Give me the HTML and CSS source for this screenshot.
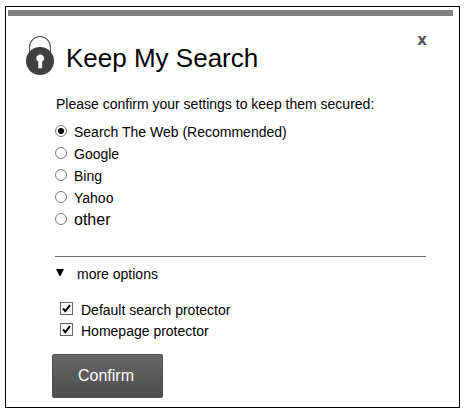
FILE: index.html
```
<!DOCTYPE html>
<html lang="en">
<head>
    <meta charset="UTF-8">
    <title>Keep My Search</title>
    <link rel="stylesheet" href="styles.css">
</head>
<body>
    <div class="dialog">
        <div class="topbar"></div>
        <div class="header">
            <svg class="lock" width="28" height="40" viewBox="0 0 28 40">
                <path d="M3.5 16V11.5a10.5 11 0 0 1 21 0V16" fill="none" stroke="#555" stroke-width="1.1"/>
                <circle cx="14" cy="25" r="14" fill="#404040"/>
                <path d="M12.6 32V25.6a3.6 3.6 0 1 1 3.2 0V32z" fill="#fff" stroke="#fff" stroke-width=".6"/>
            </svg>
            <h1>Keep My Search</h1>
            <button class="close" type="button">x</button>
        </div>
        <form class="content">
            <p class="intro">Please confirm your settings to keep them secured:</p>
            <div class="engines">
                <label class="engine"><input type="radio" name="engine" checked>Search The Web (Recommended)</label>
                <label class="engine"><input type="radio" name="engine">Google</label>
                <label class="engine"><input type="radio" name="engine">Bing</label>
                <label class="engine"><input type="radio" name="engine">Yahoo</label>
                <label class="engine other"><input type="radio" name="engine">other</label>
            </div>
            <div class="more">
                <svg width="8" height="7" viewBox="0 0 8 7"><path d="M0 0h8L4.5 7h-1z"/></svg>
                <span>more options</span>
            </div>
            <div class="protectors">
                <label class="protector">
                    <input type="checkbox" checked>
                    <svg class="tick" width="13" height="13" viewBox="0 0 13 13"><path d="M3 6.5L5.3 9.2L10 3.2"/></svg>
                    Default search protector
                </label>
                <label class="protector">
                    <input type="checkbox" checked>
                    <svg class="tick" width="13" height="13" viewBox="0 0 13 13"><path d="M3 6.5L5.3 9.2L10 3.2"/></svg>
                    Homepage protector
                </label>
            </div>
            <button class="confirm" type="button">Confirm</button>
        </form>
    </div>
</body>
</html>
```

FILE: styles.css
```
* {
    box-sizing: border-box;
}
body {
    margin: 0;
    padding: 6px 5px;
    background: #fff;
    color: #000;
    font: 14px/22px "Liberation Sans", Arial, sans-serif;
}
.dialog {
    width: 455px;
    height: 402px;
    border: 1px solid #000;
    padding: 3px 6px 0 2px;
}
.topbar {
    height: 6px;
    background: #808080;
}
.header {
    display: flex;
    align-items: flex-start;
    height: 77px;
    padding: 19px 26px 0 18px;
}
.lock {
    margin-top: 1px;
}
h1 {
    margin: 8px 0 0 12px;
    font-size: 26px;
    font-weight: normal;
    line-height: 30px;
}
.close {
    margin: -5px 0 0 auto;
    padding: 0;
    border: 0;
    background: none;
    color: #555;
    font: bold 15px/20px "DejaVu Sans", sans-serif;
}
.content {
    padding: 0 27px 0 47px;
}
.intro {
    margin: 0 0 6px 1px;
}
.engines {
    height: 136px;
    border-bottom: 1px solid #666;
}
.engine {
    display: flex;
    align-items: center;
    height: 22px;
}
input {
    appearance: none;
    flex: none;
    margin: 0;
    background: #fff;
}
.engine input {
    width: 12px;
    height: 12px;
    margin: 0 7px 2px 0;
    border: 1px solid #777;
    border-radius: 50%;
}
.engine input:checked {
    background: radial-gradient(circle, #000 2.7px, #fff 3.4px);
}
.other {
    font-size: 16px;
}
.more {
    display: flex;
    align-items: center;
    gap: 13px;
    padding: 6px 0 0 1px;
}
.more svg {
    margin-bottom: 3px;
}
.protectors {
    padding: 14px 0 0 5px;
}
.protector {
    display: flex;
    align-items: center;
    height: 21px;
}
.protector input {
    width: 13px;
    height: 13px;
    margin-bottom: 3px;
    border: 1px solid #666;
}
.tick {
    margin: 0 8px 3px -13px;
    fill: none;
    stroke: #000;
    stroke-width: 2;
}
.confirm {
    display: block;
    width: 111px;
    height: 44px;
    margin: 13px 0 0 -3px;
    padding: 0 3px 0 0;
    border: 1px solid #4c4c4c;
    border-radius: 2px;
    background: linear-gradient(#686868, #4c4c4c);
    color: #fff;
    font: 16px "Liberation Sans", Arial, sans-serif;
}
```
